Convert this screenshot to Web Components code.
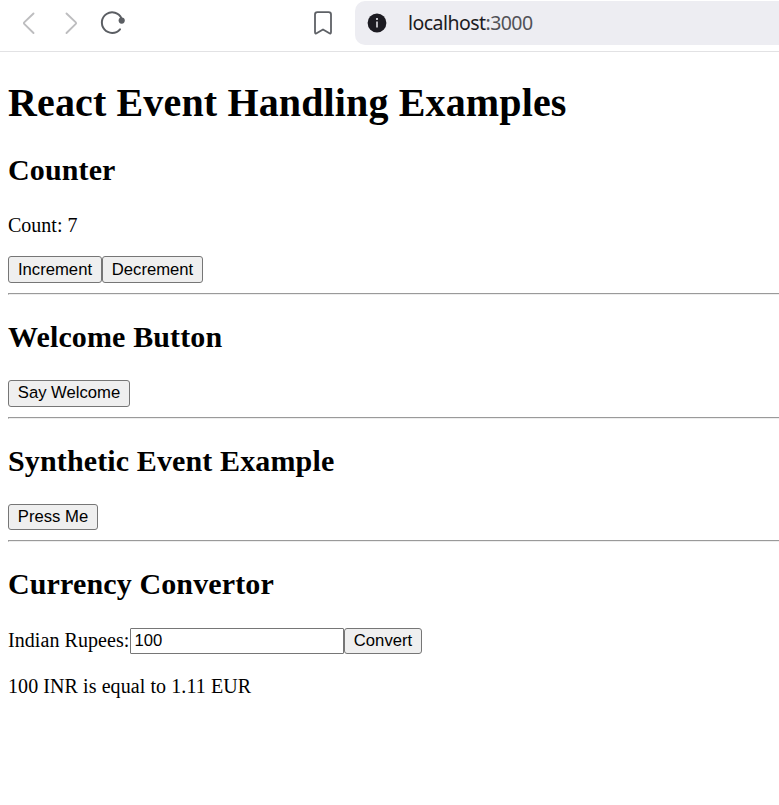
<!DOCTYPE html>
<html lang="en"><head><meta charset="utf-8"><title>React Event Handling Examples</title>
<style>
html,body{margin:0;background:#fff;overflow:hidden}
body{font:20px/23px "Liberation Serif","Times New Roman",serif;color:#000}
p{margin:0}
</style></head><body>
<browser-bar>localhost<span style="color:#515157">:3000</span></browser-bar>
<example-app>
<span slot="title">React Event Handling Examples</span>
<app-section style="--gap:27px"><span slot="heading">Counter</span>
<p style="margin-bottom:19px">Count: 7</p>
<control-row><push-button style="width:94px">Increment</push-button><push-button style="width:101px">Decrement</push-button></control-row>
</app-section>
<rule-line></rule-line>
<app-section><span slot="heading">Welcome Button</span>
<control-row><push-button style="width:122px;--lift:2px">Say Welcome</push-button></control-row>
</app-section>
<rule-line></rule-line>
<app-section><span slot="heading">Synthetic Event Example</span>
<control-row><push-button style="width:90px;height:26px;--lift:2px">Press Me</push-button></control-row>
</app-section>
<rule-line></rule-line>
<app-section style="--gap:27px"><span slot="heading">Currency Convertor</span>
<control-row><span style="width:122px;white-space:nowrap;padding-bottom:1px;letter-spacing:.06px">Indian Rupees:</span><text-field>100</text-field><push-button style="width:78px;height:26px;--lift:2px">Convert</push-button></control-row>
<p style="margin-top:21px;letter-spacing:.08px">100 INR is equal to 1.11 EUR</p>
</app-section>
</example-app>
<script>
const make=(name,html)=>customElements.define(name,class extends HTMLElement{
constructor(){super();this.attachShadow({mode:'open'}).innerHTML=html;}});
make('browser-bar',`<style>
:host{display:flex;height:51px;border-bottom:1px solid #e2e2e4}
svg{flex:none;display:block}
.address{flex:1;height:44px;margin-top:1px;border-radius:10px 0 0 10px;background:#ededf2;display:flex;align-items:center;font:19.5px/24px "Noto Sans",sans-serif;color:#1c1b22}
.url{margin-left:21px;letter-spacing:-.55px;white-space:nowrap}
</style>
<svg width="355" height="51" viewBox="0 0 355 51" fill="none" stroke-linecap="round" stroke-linejoin="round">
<g stroke="#bdbdbf" stroke-width="1.9"><path d="M33.5 13.5 24.2 22.4q-.7.7 0 1.4L33.5 33M66.5 13.5l9.3 8.9q.7.7 0 1.4L66.5 33"/></g>
<path d="M121.5 18.3A10.3 10.3 0 1 0 120 29.3" stroke="#5b5e63" stroke-width="2"/><circle cx="121.7" cy="20.6" r="3.1" fill="#5b5e63"/>
<path d="M315 32V14.6q0-2.4 2.4-2.4h11.2q2.4 0 2.4 2.4V32q0 2.4-2 1.1l-6-3.6-6 3.6q-2 1.3-2-1.1Z" stroke="#5e6166" stroke-width="1.8"/></svg>
<div class="address"><svg width="32" height="20" viewBox="0 0 32 20"><circle cx="22" cy="10" r="9.4" fill="#1c1b22"/><circle cx="22" cy="6" r="1.05" fill="#ededf2"/><path d="M22 8.5v6" stroke="#ededf2" stroke-width="1.5"/></svg><span class="url"><slot></slot></span></div>`);
make('example-app',`<style>
:host{display:block;padding:28px 0 0 8px}
h1{font-size:40px;line-height:46px;margin:0 0 27px;white-space:nowrap;letter-spacing:.14px}
</style><h1><slot name="title"></slot></h1><slot></slot>`);
make('app-section',`<style>
:host{display:block}
h2{font-size:30px;line-height:34px;margin:0 0 var(--gap,26px);white-space:nowrap;letter-spacing:.13px}
</style><h2><slot name="heading"></slot></h2><slot></slot>`);
make('control-row',`<style>:host{display:flex;align-items:center}</style><slot></slot>`);
make('rule-line',`<style>
:host{display:block;height:2px;margin:10px 0 25px;box-sizing:border-box;border-top:1px solid #9a9a9a;border-bottom:1px solid #eee;border-left:1px solid #9a9a9a}
</style>`);
make('push-button',`<style>
:host{display:block;height:27px;flex:none}
button{display:block;box-sizing:border-box;width:100%;height:100%;margin:0;padding:0 0 var(--lift,0px);border:1px solid #767676;border-radius:3px;background:#efefef;color:#000;font:16.67px/19px "Liberation Sans",Arial,sans-serif;white-space:nowrap;text-align:center}
</style><button><slot></slot></button>`);
make('text-field',`<style>
:host{display:block;box-sizing:border-box;width:214px;height:26px;border:1px solid #767676;border-radius:1px;padding:2px 3.5px;background:#fff;font:16.67px/20px "Liberation Sans",Arial,sans-serif}
</style><slot></slot>`);
</script>
</body></html>
